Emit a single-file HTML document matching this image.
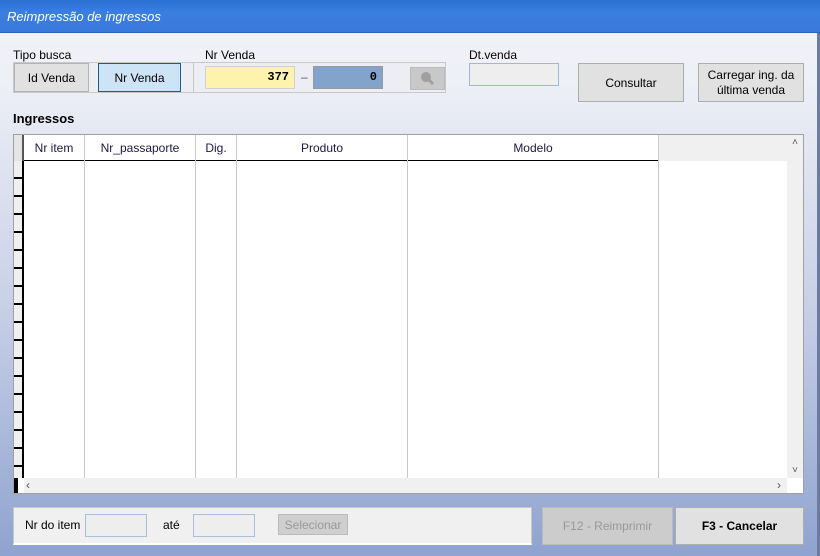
<!DOCTYPE html>
<html><head><meta charset="utf-8"><style>
*{margin:0;padding:0;box-sizing:border-box}
body{width:820px;height:556px;overflow:hidden;font-family:"Liberation Sans",sans-serif;font-size:12px;color:#000;position:relative;background:linear-gradient(#f2f3f8 0px,#eef0f7 80px,#c9d1e7 300px,#8fa3cf 556px)}
.abs{position:absolute}
.title{left:0;top:0;width:820px;height:33px;background:linear-gradient(#2a6fd4,#3a7fe0 40%,#3a78dc);border-bottom:1px solid #2c62b8}
.title span{position:absolute;left:7px;top:9px;color:#fff;font-style:italic;font-size:13px}
.lbl{font-size:12px}
.btn{background:#e1e1e1;border:1px solid #adadad;display:flex;align-items:center;justify-content:center;text-align:center}
.hdr{position:absolute;top:0;height:26px;border-right:1px solid #ccc;display:flex;align-items:center;justify-content:center;color:#1a1a40}
.vl{position:absolute;top:26px;width:1px;height:317px;background:#c8c8c8}
</style></head><body>
<div class="abs title"><span>Reimpressão de ingressos</span></div>
<div class="abs" style="right:0;top:33px;width:3px;height:523px;background:#6e7aa0"></div>
<div class="abs lbl" style="left:13px;top:48px">Tipo busca</div>
<div class="abs lbl" style="left:205px;top:48px">Nr Venda</div>
<div class="abs lbl" style="left:469px;top:48px">Dt.venda</div>
<div class="abs" style="left:13px;top:62px;width:433px;height:31px;border:1px solid #c8c8c8;background:#eceef4"></div>
<div class="abs" style="left:193px;top:63px;width:1px;height:29px;background:#c8c8c8"></div>
<div class="abs btn" style="left:14px;top:63px;width:75px;height:29px;border-color:#b4b4b4">Id Venda</div>
<div class="abs btn" style="left:98px;top:63px;width:83px;height:29px;background:#cde4f7;border-color:#1d5a90">Nr Venda</div>
<div class="abs" style="left:205px;top:66px;width:90px;height:23px;background:#fdf3ac;border:1px solid #d0d0d0;font-family:'Liberation Mono',monospace;font-weight:bold;text-align:right;padding:3px 5px 0 0">377</div>
<div class="abs" style="left:301px;top:70px;color:#555">–</div>
<div class="abs" style="left:313px;top:66px;width:70px;height:23px;background:#82a3cb;border:1px solid #999;font-family:'Liberation Mono',monospace;font-weight:bold;text-align:right;padding:3px 5px 0 0">0</div>
<div class="abs" style="left:410px;top:67px;width:35px;height:23px;background:#c8c8c8;border:1px solid #bbb">
<svg width="33" height="21"><circle cx="15" cy="9" r="5" fill="#a0a0a0"/><line x1="18" y1="12" x2="22" y2="16" stroke="#a0a0a0" stroke-width="3"/></svg></div>
<div class="abs" style="left:469px;top:63px;width:90px;height:23px;border:1px solid #9eb8d8;background:#eeeeee"></div>
<div class="abs btn" style="left:578px;top:63px;width:106px;height:39px">Consultar</div>
<div class="abs btn" style="left:698px;top:63px;width:106px;height:39px;line-height:15px">Carregar ing. da<br>última venda</div>
<div class="abs" style="left:13px;top:111px;font-weight:bold;font-size:13px">Ingressos</div>
<div class="abs" style="left:13px;top:134px;width:791px;height:360px;background:#fff;border:1px solid #a0a0a0">
 <div class="abs" style="left:0;top:0;width:10px;height:343px;background:#f0f0f0;border-right:2px solid #000"></div>
 <div class="abs" style="left:0;top:0;width:10px;height:26px;background:#e4e4e4;border-right:2px solid #555"></div>
 <div id="rows"></div>
 <div class="abs" style="left:10px;top:25px;width:763px;height:1px;background:#000"></div>
 <div class="hdr" style="left:10px;width:61px">Nr item</div>
 <div class="hdr" style="left:71px;width:111px">Nr_passaporte</div>
 <div class="hdr" style="left:182px;width:41px">Dig.</div>
 <div class="hdr" style="left:223px;width:171px">Produto</div>
 <div class="hdr" style="left:394px;width:251px">Modelo</div>
 <div class="hdr" style="left:645px;width:128px;background:#f0f0f0;border:none"></div>
 <div class="vl" style="left:70px"></div><div class="vl" style="left:181px"></div><div class="vl" style="left:222px"></div><div class="vl" style="left:393px"></div><div class="vl" style="left:644px"></div>
 <div class="abs" style="left:773px;top:0;width:16px;height:343px;background:#f0f0f0;color:#555;font-size:10px;text-align:center"><div style="margin-top:2px">˄</div><div style="position:absolute;bottom:2px;width:16px">˅</div></div>
 <div class="abs" style="left:10px;top:343px;width:763px;height:15px;background:#f0f0f0;color:#555;font-size:12px;line-height:14px"><span style="margin-left:2px">‹</span><span style="position:absolute;right:6px">›</span></div>
 <div class="abs" style="left:0;top:343px;width:4px;height:15px;background:#000"></div>
</div>
<div class="abs" style="left:13px;top:507px;width:519px;height:38px;background:#f0f0f0;border:1px solid #c8c8c8;border-bottom:2px solid #fff"></div>
<div class="abs" style="left:25px;top:518px;font-size:12px">Nr do item</div>
<div class="abs" style="left:85px;top:514px;width:62px;height:23px;border:1px solid #a8c0dc;background:#eee"></div>
<div class="abs" style="left:163px;top:518px">até</div>
<div class="abs" style="left:193px;top:514px;width:62px;height:23px;border:1px solid #a8c0dc;background:#eee"></div>
<div class="abs btn" style="left:278px;top:514px;width:70px;height:21px;background:#cfcfcf;color:#999;border-color:#bbb">Selecionar</div>
<div class="abs btn" style="left:542px;top:507px;width:131px;height:38px;background:#cccccc;color:#999;border-color:#bbb">F12 - Reimprimir</div>
<div class="abs btn" style="left:675px;top:507px;width:129px;height:38px;font-weight:bold">F3 - Cancelar</div>
<script>
var h='';for(var y=42;y<343;y+=18)h+='<div class="abs" style="left:0;top:'+y+'px;width:10px;height:2px;background:#000"></div>';
document.getElementById('rows').innerHTML=h;
</script>
</body></html>
